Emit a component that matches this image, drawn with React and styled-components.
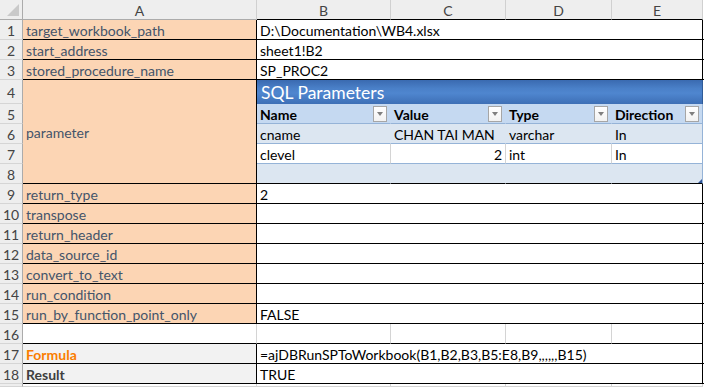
import React from "react";
import styled, { createGlobalStyle, css } from "styled-components";

const GlobalStyle = createGlobalStyle`
  html, body { margin: 0; padding: 0; background: #fff; }
  body { font-family: Lato, "Open Sans", sans-serif; overflow: hidden; }
  * { box-sizing: border-box; }
`;

const GRID = "#d4d4d4";
const BLACK = "#000";
const TBL = "#95b3d7";

const Sheet = styled.div`
  display: grid;
  grid-template-columns: 23px 234px 134px 115px 106px 91px 1fr;
  grid-template-rows: 20px repeat(3, 20px) 24px repeat(14, 20px) 1fr;
  width: 704px;
  height: 387px;
  font-size: 14px;
  color: #000;
`;

const Cell = styled.div`
  position: relative;
  display: flex;
  align-items: center;
  padding: 2px 3px 0 3px;
  white-space: nowrap;
  overflow: hidden;
  border-right: 1px solid ${(p) => p.$r || GRID};
  border-bottom: 1px solid ${(p) => p.$b || GRID};
  background: ${(p) => p.$bg || "#fff"};
  grid-column: ${(p) => (p.$span ? `span ${p.$span}` : "auto")};
  grid-row: ${(p) => (p.$rspan ? `span ${p.$rspan}` : "auto")};
  justify-content: ${(p) => (p.$right ? "flex-end" : "flex-start")};
`;

const Corner = styled.div`
  position: relative;
  background: #eeeeee;
  border-right: 1px solid #ababab;
  border-bottom: 1px solid #ababab;
  &::after {
    content: "";
    position: absolute;
    right: 3px;
    bottom: 3px;
    width: 0;
    height: 0;
    border-left: 12px solid transparent;
    border-bottom: 12px solid #c9c9c9;
  }
`;

const ColHead = styled.div`
  display: flex;
  align-items: center;
  justify-content: center;
  padding-top: 1px;
  background: #eeeeee;
  color: #444;
  font-size: 14px;
  border-right: 1px solid #d0d0d0;
  border-bottom: 1px solid ${(p) => p.$b || "#ababab"};
`;

const RowHead = styled.div`
  display: flex;
  align-items: center;
  justify-content: center;
  padding-top: 2px;
  background: #eeeeee;
  color: #444;
  font-size: 14px;
  border-right: 1px solid #ababab;
  border-bottom: 1px solid #d5d5d5;
`;

const labelVariants = {
  param: css`background: #fcd5b4; color: #44546a;`,
  calc: css`background: #f2f2f2; color: #fa7d00; font-weight: 700;`,
  output: css`background: #f2f2f2; color: #3f3f3f; font-weight: 700;`,
  blank: css`background: #fff;`,
};

const Label = styled(Cell)`
  ${(p) => labelVariants[p.$variant || "param"]}
`;

const ValueInner = styled.div`
  grid-column: span 5;
  display: grid;
  grid-template-columns: 446px 1fr;
  border-bottom: 1px solid ${BLACK};
`;

const ValueText = styled.div`
  display: flex;
  align-items: center;
  padding: 2px 3px 0 3px;
  white-space: nowrap;
  border-right: 1px solid ${BLACK};
  background: #fff;
`;

const Filler = styled.div`
  background: #fff;
`;

const TableTitle = styled.div`
  grid-column: span 4;
  display: flex;
  align-items: center;
  padding: 1px 3px 0 4px;
  color: #fff;
  font-size: 17.5px;
  background: linear-gradient(180deg, #3a6ab0 0%, #4a80c8 35%, #4f86cf 55%, #3d6fb6 100%);
  border-right: 1px solid #2f5b98;
`;

const HeadCell = styled.div`
  display: flex;
  align-items: center;
  justify-content: space-between;
  padding: 2px 3px 0 3px;
  font-weight: 700;
  background: #c5d9f1;
  border-bottom: 1px solid ${TBL};
  border-right: 1px solid ${(p) => (p.$last ? TBL : "#c5d9f1")};
`;

const FilterButton = styled.span`
  display: flex;
  align-items: center;
  justify-content: center;
  width: 14px;
  height: 16px;
  margin-top: -2px;
  background: linear-gradient(#ffffff, #f2f2f2);
  border: 1px solid #a6a6a6;
  flex: none;
  &::after {
    content: "";
    width: 0;
    height: 0;
    border-left: 3.5px solid transparent;
    border-right: 3.5px solid transparent;
    border-top: 4px solid #7f7f7f;
  }
`;

const DataCell = styled(Cell)`
  border-bottom-color: ${(p) => p.$b || TBL};
`;

const Handle = styled.span`
  position: absolute;
  right: 0;
  bottom: 0;
  width: 0;
  height: 0;
  border-left: 4px solid transparent;
  border-bottom: 4px solid #2f5597;
`;

const Pad = styled.div`
  background: #fff;
`;

const BAND = "#dce6f1";

function ValueRow({ children }) {
  return (
    <ValueInner>
      <ValueText>{children}</ValueText>
      <Filler />
    </ValueInner>
  );
}

const params = [
  ["target_workbook_path", "D:\\Documentation\\WB4.xlsx"],
  ["start_address", "sheet1!B2"],
  ["stored_procedure_name", "SP_PROC2"],
];

const lower = [
  ["return_type", "2"],
  ["transpose", ""],
  ["return_header", ""],
  ["data_source_id", ""],
  ["convert_to_text", ""],
  ["run_condition", ""],
  ["run_by_function_point_only", "FALSE"],
];

export default function App() {
  return (
    <>
      <GlobalStyle />
      <Sheet>
        <Corner />
        <ColHead>A</ColHead>
        <ColHead $b={BLACK}>B</ColHead>
        <ColHead $b={BLACK}>C</ColHead>
        <ColHead $b={BLACK}>D</ColHead>
        <ColHead $b={BLACK}>E</ColHead>
        <Pad />

        {params.map(([k, v], i) => (
          <React.Fragment key={k}>
            <RowHead>{i + 1}</RowHead>
            <Label $r={BLACK} $b={BLACK}>{k}</Label>
            <ValueRow>{v}</ValueRow>
          </React.Fragment>
        ))}

        <RowHead>4</RowHead>
        <Label $r={BLACK} $b={BLACK} $rspan={5}>parameter</Label>
        <TableTitle>SQL Parameters</TableTitle>
        <Pad />

        <RowHead>5</RowHead>
        <HeadCell>Name<FilterButton /></HeadCell>
        <HeadCell>Value<FilterButton /></HeadCell>
        <HeadCell>Type<FilterButton /></HeadCell>
        <HeadCell $last>Direction<FilterButton /></HeadCell>
        <Pad />

        <RowHead>6</RowHead>
        <DataCell $bg={BAND} $r={BAND}>cname</DataCell>
        <DataCell $bg={BAND} $r={BAND}>CHAN TAI MAN</DataCell>
        <DataCell $bg={BAND} $r={BAND}>varchar</DataCell>
        <DataCell $bg={BAND} $r={TBL}>In</DataCell>
        <Pad />

        <RowHead>7</RowHead>
        <DataCell>clevel</DataCell>
        <DataCell $right>2</DataCell>
        <DataCell>int</DataCell>
        <DataCell $r={TBL}>In</DataCell>
        <Pad />

        <RowHead>8</RowHead>
        <DataCell $bg={BAND} $r={BAND} $b={BLACK}></DataCell>
        <DataCell $bg={BAND} $r={BAND} $b={BLACK}></DataCell>
        <DataCell $bg={BAND} $r={BAND} $b={BLACK}></DataCell>
        <DataCell $bg={BAND} $r={TBL} $b={BLACK}><Handle /></DataCell>
        <Pad />

        {lower.map(([k, v], i) => (
          <React.Fragment key={k}>
            <RowHead>{i + 9}</RowHead>
            <Label $r={BLACK} $b={BLACK}>{k}</Label>
            <ValueRow>{v}</ValueRow>
          </React.Fragment>
        ))}

        <RowHead>16</RowHead>
        <Label $variant="blank" $b={BLACK}></Label>
        <Cell $b={BLACK} />
        <Cell $b={BLACK} />
        <Cell $b={BLACK} />
        <Cell $b={BLACK} $r={BLACK} />
        <Pad />

        <RowHead>17</RowHead>
        <Label $variant="calc" $r={BLACK} $b={BLACK}>Formula</Label>
        <ValueRow>=ajDBRunSPToWorkbook(B1,B2,B3,B5:E8,B9,,,,,,B15)</ValueRow>

        <RowHead>18</RowHead>
        <Label $variant="output" $r={BLACK} $b={BLACK}>Result</Label>
        <ValueRow>TRUE</ValueRow>

        <RowHead />
        <Cell />
        <Cell />
        <Cell />
        <Cell />
        <Cell />
        <Pad />
      </Sheet>
    </>
  );
}
